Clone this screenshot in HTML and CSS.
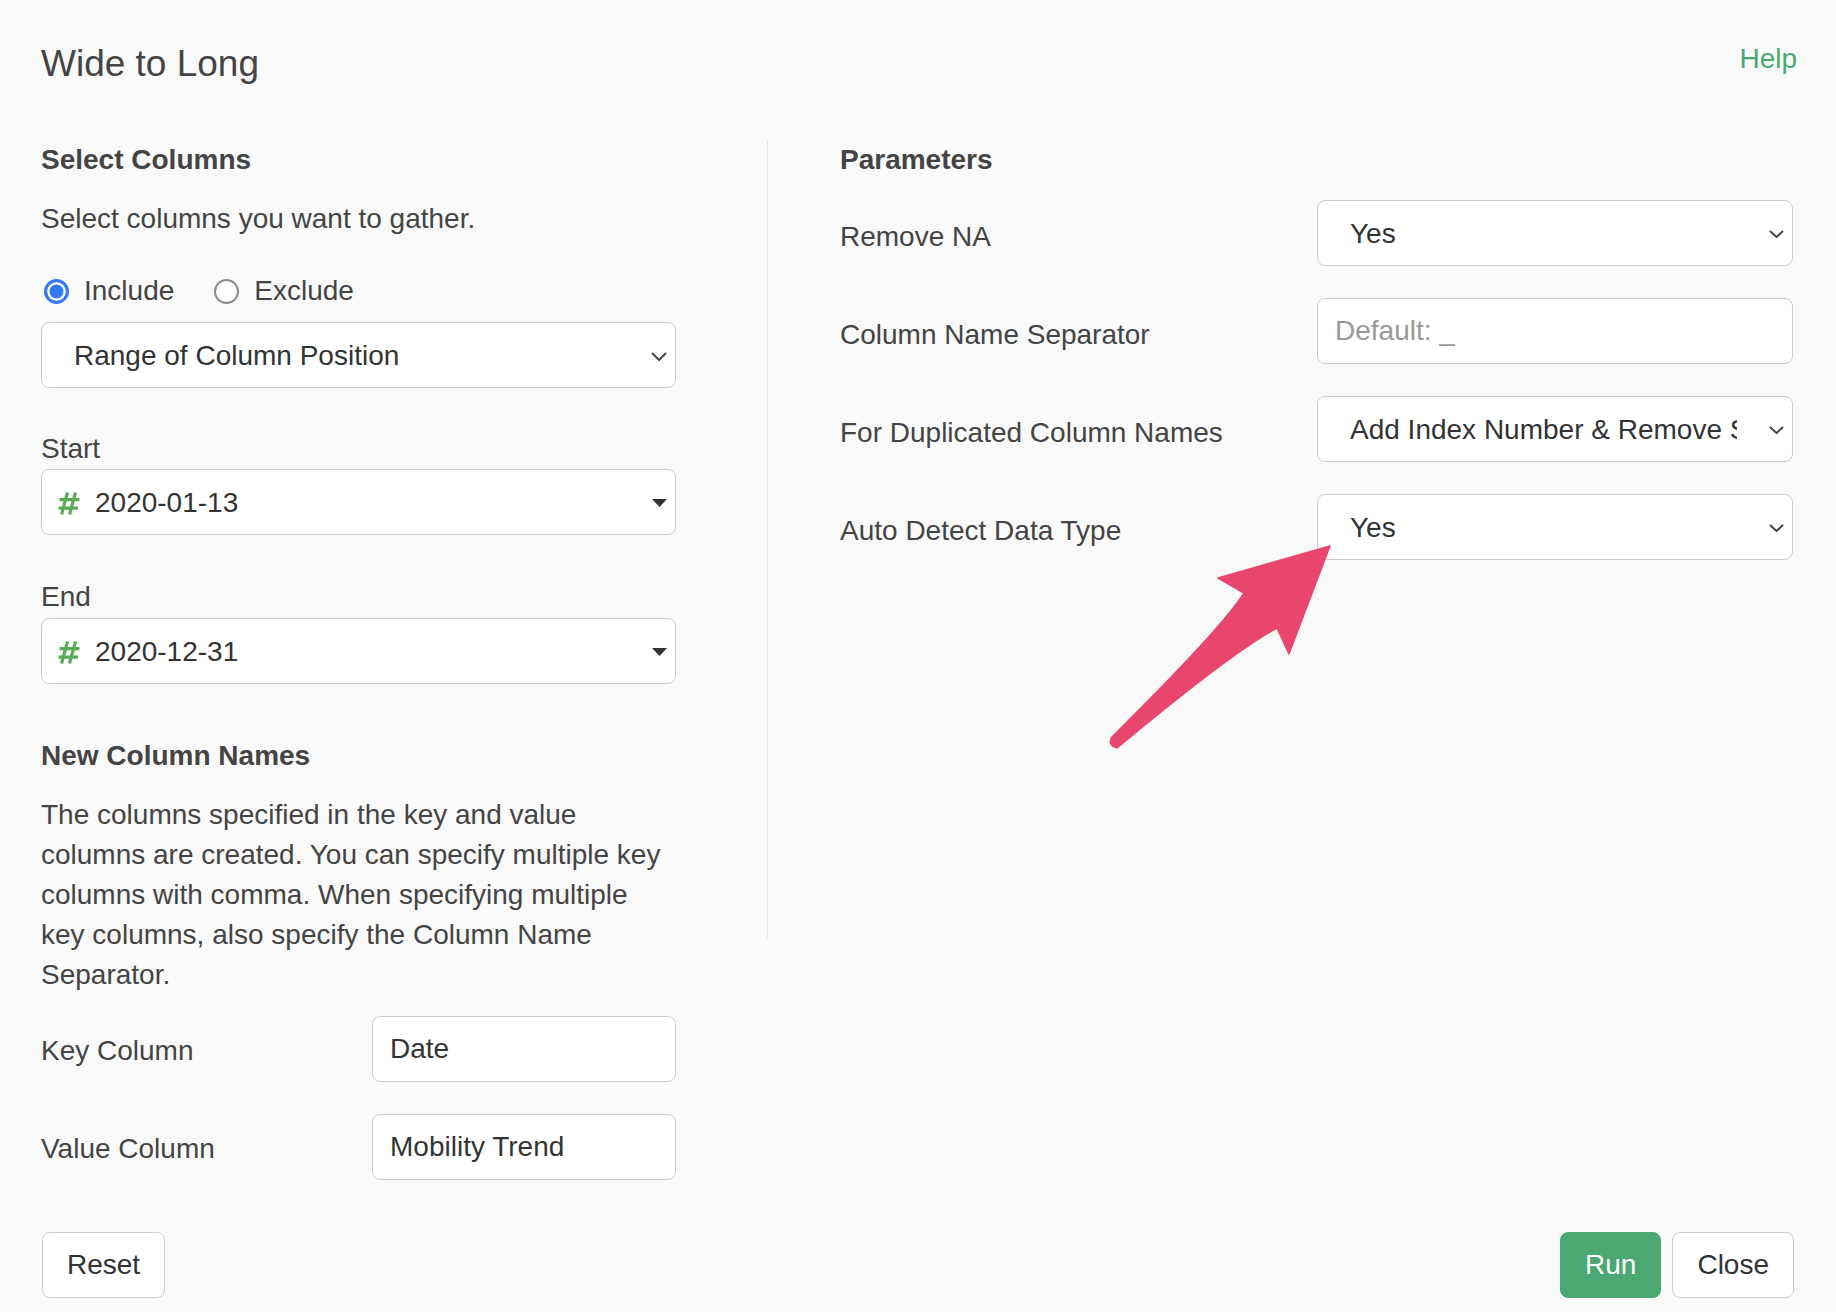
FILE: index.html
```html
<!DOCTYPE html>
<html lang="en">
<head>
    <meta charset="UTF-8">
    <meta name="viewport" content="width=device-width, initial-scale=1.0">
    <title>Wide to Long</title>
    <link rel="stylesheet" href="styles.css">
</head>
<body>
<div class="dialog">

    <header class="dialog-header">
        <h1>Wide to Long</h1>
        <a class="help" href="#">Help</a>
    </header>

    <div class="dialog-body">
        <!-- colonna sinistra: selezione colonne -->
        <section class="col-left">
            <h2>Select Columns</h2>
            <p class="hint">Select columns you want to gather.</p>

            <div class="radio-row">
                <label class="radio"><span class="radio-mark checked"></span>Include</label>
                <label class="radio"><span class="radio-mark"></span>Exclude</label>
            </div>

            <div class="select select-mode">
                <span class="select-text">Range of Column Position</span>
                <svg class="chevron" width="16" height="9" viewBox="0 0 16 9"><polyline points="1,1 8,8 15,1"/></svg>
            </div>

            <div class="field-label">Start</div>
            <div class="select column-select">
                <svg class="hash" width="22" height="23" viewBox="0 0 22 23"><path d="M9.5 0.5 L3.5 22.5 M17.5 0.5 L11.5 22.5 M1.5 7.7 L21.5 7.7 M0.5 16.2 L20 16.2"/></svg>
                <span class="select-text">2020-01-13</span>
                <svg class="caret" width="15" height="8" viewBox="0 0 15 8"><path d="M0 0 L15 0 L7.5 8 Z"/></svg>
            </div>

            <div class="field-label label-end">End</div>
            <div class="select column-select select-end">
                <svg class="hash" width="22" height="23" viewBox="0 0 22 23"><path d="M9.5 0.5 L3.5 22.5 M17.5 0.5 L11.5 22.5 M1.5 7.7 L21.5 7.7 M0.5 16.2 L20 16.2"/></svg>
                <span class="select-text">2020-12-31</span>
                <svg class="caret" width="15" height="8" viewBox="0 0 15 8"><path d="M0 0 L15 0 L7.5 8 Z"/></svg>
            </div>

            <h2 class="new-cols">New Column Names</h2>
            <p class="desc">The columns specified in the key and value columns are created. You can specify multiple key columns with comma. When specifying multiple key columns, also specify the Column Name Separator.</p>

            <div class="form-row first">
                <label>Key Column</label>
                <input type="text" value="Date">
            </div>
            <div class="form-row">
                <label>Value Column</label>
                <input type="text" value="Mobility Trend">
            </div>
        </section>

        <div class="divider"></div>

        <!-- colonna destra: parametri -->
        <section class="col-right">
            <h2>Parameters</h2>

            <div class="param-row first">
                <label>Remove NA</label>
                <div class="select">
                    <span class="select-text">Yes</span>
                    <svg class="chevron" width="15" height="8" viewBox="0 0 15 8"><polyline points="1,1 7.5,7 14,1"/></svg>
                </div>
            </div>
            <div class="param-row">
                <label>Column Name Separator</label>
                <input type="text" placeholder="Default: _">
            </div>
            <div class="param-row">
                <label>For Duplicated Column Names</label>
                <div class="select">
                    <span class="select-text">Add Index Number &amp; Remove Spaces</span>
                    <svg class="chevron" width="15" height="8" viewBox="0 0 15 8"><polyline points="1,1 7.5,7 14,1"/></svg>
                </div>
            </div>
            <div class="param-row">
                <label>Auto Detect Data Type</label>
                <div class="select">
                    <span class="select-text">Yes</span>
                    <svg class="chevron" width="15" height="8" viewBox="0 0 15 8"><polyline points="1,1 7.5,7 14,1"/></svg>
                </div>
            </div>
        </section>
    </div>

    <footer class="dialog-footer">
        <button class="btn">Reset</button>
        <button class="btn btn-run">Run</button>
        <button class="btn">Close</button>
    </footer>

    <!-- freccia di annotazione -->
    <svg class="pointer-arrow" width="240" height="215" viewBox="1100 540 240 215">
        <path d="M1330,546 L1218,578 L1244,593 Q1222,628 1112,737 Q1107,745 1117,748 Q1232,652 1277,628 L1289,654 Z"/>
    </svg>
</div>
</body>
</html>
```

FILE: styles.css
```css
body {
    margin: 0;
    background-color: #f9f9f9;
    font-family: "Liberation Sans", Arial, sans-serif;
    font-size: 28px;
    line-height: 40px;
    color: #444;
}
.dialog {
    position: relative;
    padding: 0 43px 0 41px;
    min-height: 1312px;
    box-sizing: border-box;
}
.dialog-header {
    display: flex;
    justify-content: space-between;
    align-items: flex-start;
    padding-top: 42px;
}
.dialog-header h1 {
    margin: 0;
    font-size: 37px;
    line-height: 44px;
    font-weight: normal;
    color: #444;
}
.help {
    color: #4aa873;
    text-decoration: none;
    margin-top: -3px;
    margin-right: -4px;
}
.dialog-body {
    display: flex;
    align-items: flex-start;
    margin-top: 54px;
}
.col-left {
    width: 635px;
    flex: none;
}
.divider {
    width: 1px;
    height: 798px;
    background-color: #e4e4e4;
    margin: 0 72px 0 91px;
    flex: none;
}
.col-right {
    flex: 1;
    min-width: 0;
}
h2 {
    margin: 0;
    font-size: 28px;
    line-height: 40px;
    font-weight: bold;
    color: #444;
}
.hint {
    margin: 19px 0 0;
}
.radio-row {
    display: flex;
    gap: 40px;
    margin-top: 32px;
}
.radio {
    display: flex;
    align-items: center;
    gap: 15px;
}
.radio-mark {
    width: 25px;
    height: 25px;
    box-sizing: border-box;
    border-radius: 50%;
    border: 2px solid #8a8a8a;
    background-color: #fff;
}
.radio:first-child .radio-mark {
    margin-left: 3px;
}
.radio-mark.checked {
    border: 3px solid #3478f6;
    background-color: #3478f6;
    box-shadow: inset 0 0 0 2.5px #fff;
}
.select {
    display: flex;
    align-items: center;
    min-width: 0;
    height: 66px;
    box-sizing: border-box;
    border: 1px solid #ccc;
    border-radius: 8px;
    background-color: #fff;
    padding: 2px 8px 0 32px;
    color: #333;
}
.select-mode {
    margin-top: 11px;
}
.select-text {
    flex: 1;
    min-width: 0;
    overflow: hidden;
    white-space: nowrap;
    margin-right: 32px;
}
.chevron {
    flex: none;
    fill: none;
    stroke: #444;
    stroke-width: 2;
}
.column-select {
    padding-left: 16px;
}
.hash {
    flex: none;
    margin-right: 15px;
    fill: none;
    stroke: #5aab55;
    stroke-width: 3.2;
}
.caret {
    flex: none;
    fill: #333;
}
.field-label {
    margin-top: 41px;
}
.label-end {
    margin-top: 42px;
}
.select-end {
    margin-top: 1px;
}
.new-cols {
    margin-top: 52px;
}
.desc {
    margin: 19px 0 0;
    width: 630px;
}
.form-row {
    display: flex;
    align-items: flex-start;
    margin-top: 32px;
}
.form-row.first {
    margin-top: 21px;
}
.form-row label {
    width: 331px;
    flex: none;
    padding-top: 15px;
}
input {
    flex: 1;
    min-width: 0;
    height: 66px;
    box-sizing: border-box;
    border: 1px solid #ccc;
    border-radius: 8px;
    background-color: #fff;
    padding: 0 17px;
    font-family: inherit;
    font-size: 28px;
    color: #333;
    outline: none;
}
input::placeholder {
    color: #999;
}
.param-row {
    display: flex;
    align-items: flex-start;
    margin-top: 32px;
}
.param-row.first {
    margin-top: 20px;
}
.param-row label {
    width: 477px;
    flex: none;
    padding-top: 17px;
}
.param-row .select,
.param-row input {
    flex: 1;
}
.dialog-footer {
    display: flex;
    align-items: center;
    gap: 11px;
    margin-top: 52px;
}
.btn {
    height: 66px;
    padding: 0 24px;
    border: 1px solid #ccc;
    border-radius: 8px;
    background-color: #fff;
    color: #333;
    font-family: inherit;
    font-size: 28px;
    cursor: pointer;
}
.btn:first-child {
    margin-left: 1px;
}
.btn:last-child {
    margin-right: -1px;
}
.btn-run {
    margin-left: auto;
    background-color: #4ba873;
    border-color: #4ba873;
    color: #fff;
}
.pointer-arrow {
    position: absolute;
    left: 1100px;
    top: 540px;
    pointer-events: none;
    fill: #e9466e;
    stroke: #e9466e;
    stroke-width: 1.5;
    stroke-linejoin: round;
}
```
